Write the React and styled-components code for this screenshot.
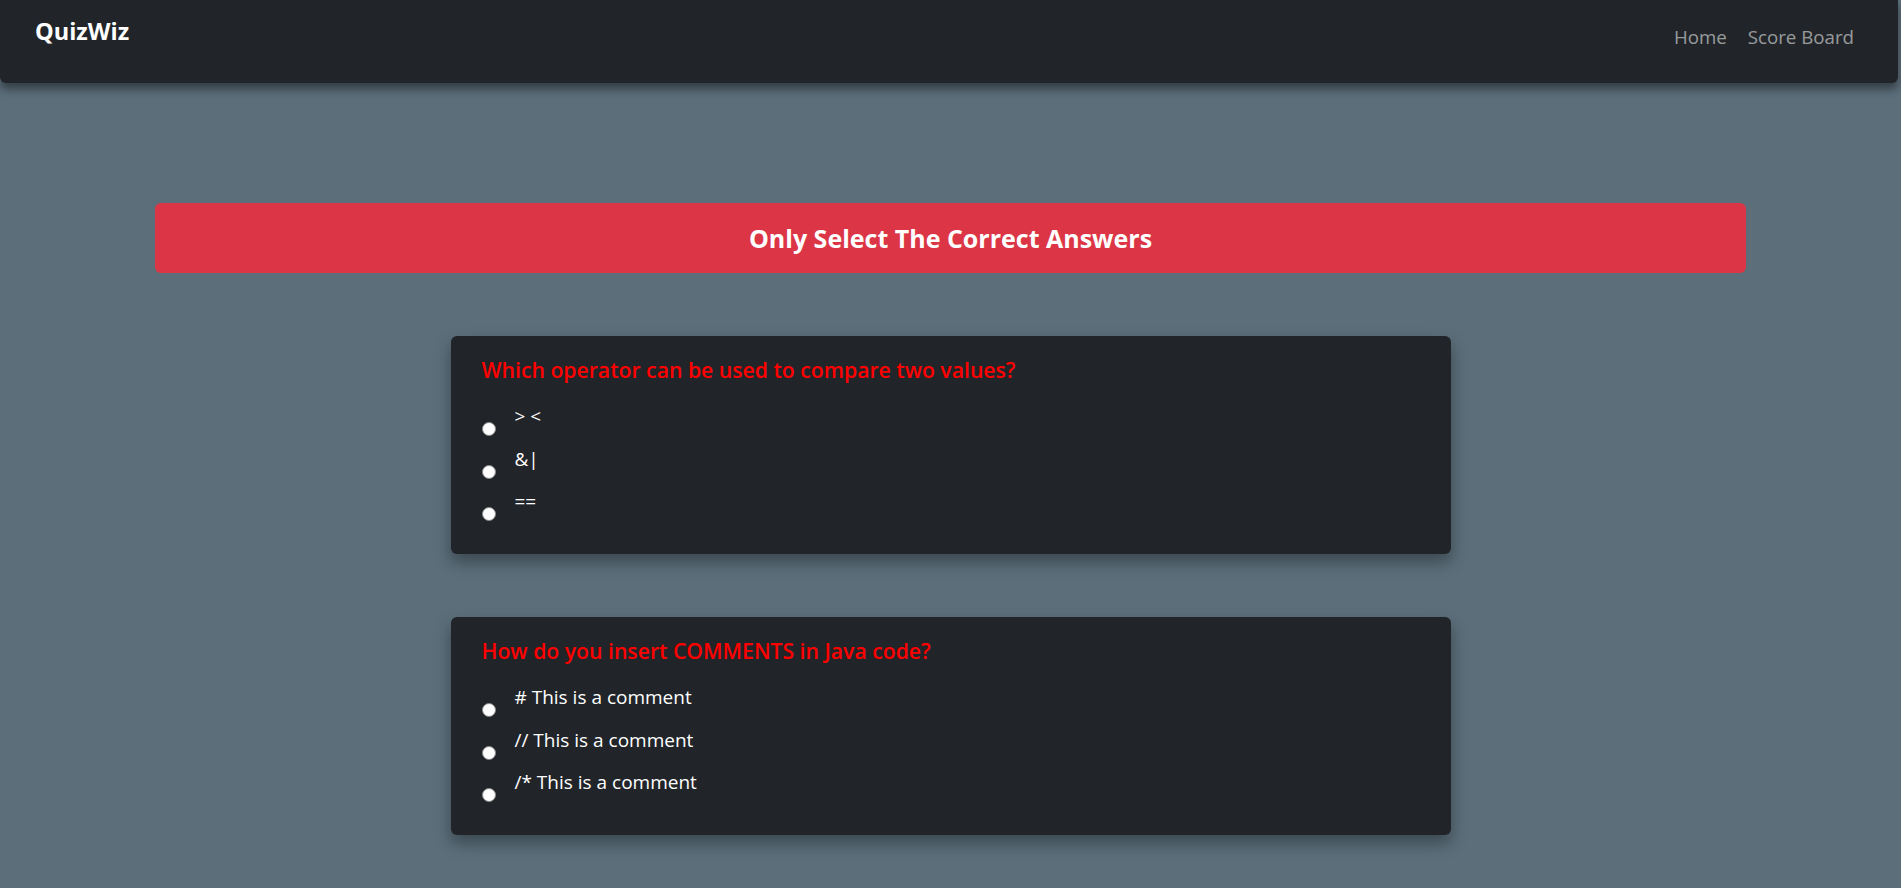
import React from 'react';
import styled, { createGlobalStyle } from 'styled-components';

const GlobalStyle = createGlobalStyle`
  html, body {
    margin: 0;
    padding: 0;
  }
  body {
    background-color: #5b6e7a;
    font-family: "Open Sans", "Noto Sans", Arial, sans-serif;
    color: #fff;
  }
`;

const Page = styled.div`
  min-height: 100vh;
  background-color: #5b6e7a;
`;

const NavBar = styled.nav`
  display: flex;
  justify-content: space-between;
  align-items: flex-start;
  height: 83px;
  box-sizing: border-box;
  width: calc(100% - 3px);
  padding: 15px 44px 0 35px;
  background-color: #212529;
  border-radius: 0 0 6px 6px;
  box-shadow: 0 6px 10px rgba(0, 0, 0, 0.45);
  position: relative;
  z-index: 1;
`;

const Brand = styled.a`
  font-size: 23.5px;
  font-weight: 700;
  color: #fff;
  text-decoration: none;
  line-height: 32px;
`;

const NavLinks = styled.div`
  display: flex;
  gap: 21px;
  padding-top: 7px;
`;

const NavLink = styled.a`
  font-size: 18.7px;
  color: rgba(255, 255, 255, 0.55);
  text-decoration: none;
  line-height: 30px;
`;

const Main = styled.main`
  display: flex;
  flex-direction: column;
  align-items: center;
  padding: 120px 155px 40px;
  gap: 63px;
`;

const Banner = styled.div`
  align-self: stretch;
  height: 70px;
  display: flex;
  align-items: center;
  justify-content: center;
  background-color: #dc3545;
  border-radius: 6px;
  font-size: 25px;
  font-weight: 700;
  color: #fff;
`;

const Card = styled.div`
  width: 1000px;
  box-sizing: border-box;
  padding: 21px 32px 33px 31px;
  background-color: #212529;
  border-radius: 6px;
  box-shadow: 0 8px 16px rgba(0, 0, 0, 0.35);
`;

const Question = styled.h3`
  margin: 0 0 21px;
  font-size: 21.2px;
  font-weight: 600;
  line-height: 25px;
  color: #ff0000;
`;

const Options = styled.div`
  display: flex;
  flex-direction: column;
  gap: 9.5px;
`;

const Option = styled.label`
  display: flex;
  align-items: flex-start;
  gap: 19px;
  cursor: pointer;
`;

const Radio = styled.input.attrs({ type: 'radio' })`
  appearance: none;
  margin: 19px 0 0;
  width: 14px;
  height: 14px;
  flex-shrink: 0;
  border-radius: 50%;
  background-color: #fff;
  border: 1px solid #8a8a8a;
  box-sizing: border-box;
`;

const OptionText = styled.span`
  font-size: 19px;
  line-height: 26px;
  color: #fff;
`;

const questions = [
  {
    id: 'q1',
    text: 'Which operator can be used to compare two values?',
    options: ['> <', '&|', '=='],
  },
  {
    id: 'q2',
    text: 'How do you insert COMMENTS in Java code?',
    options: ['# This is a comment', '// This is a comment', '/* This is a comment'],
  },
];

const App = () => (
  <Page>
    <GlobalStyle />
    <NavBar>
      <Brand href="#">QuizWiz</Brand>
      <NavLinks>
        <NavLink href="#">Home</NavLink>
        <NavLink href="#">Score Board</NavLink>
      </NavLinks>
    </NavBar>
    <Main>
      <Banner>Only Select The Correct Answers</Banner>
      {questions.map((q) => (
        <Card key={q.id}>
          <Question>{q.text}</Question>
          <Options>
            {q.options.map((opt) => (
              <Option key={opt}>
                <Radio name={q.id} />
                <OptionText>{opt}</OptionText>
              </Option>
            ))}
          </Options>
        </Card>
      ))}
    </Main>
  </Page>
);

export default App;
